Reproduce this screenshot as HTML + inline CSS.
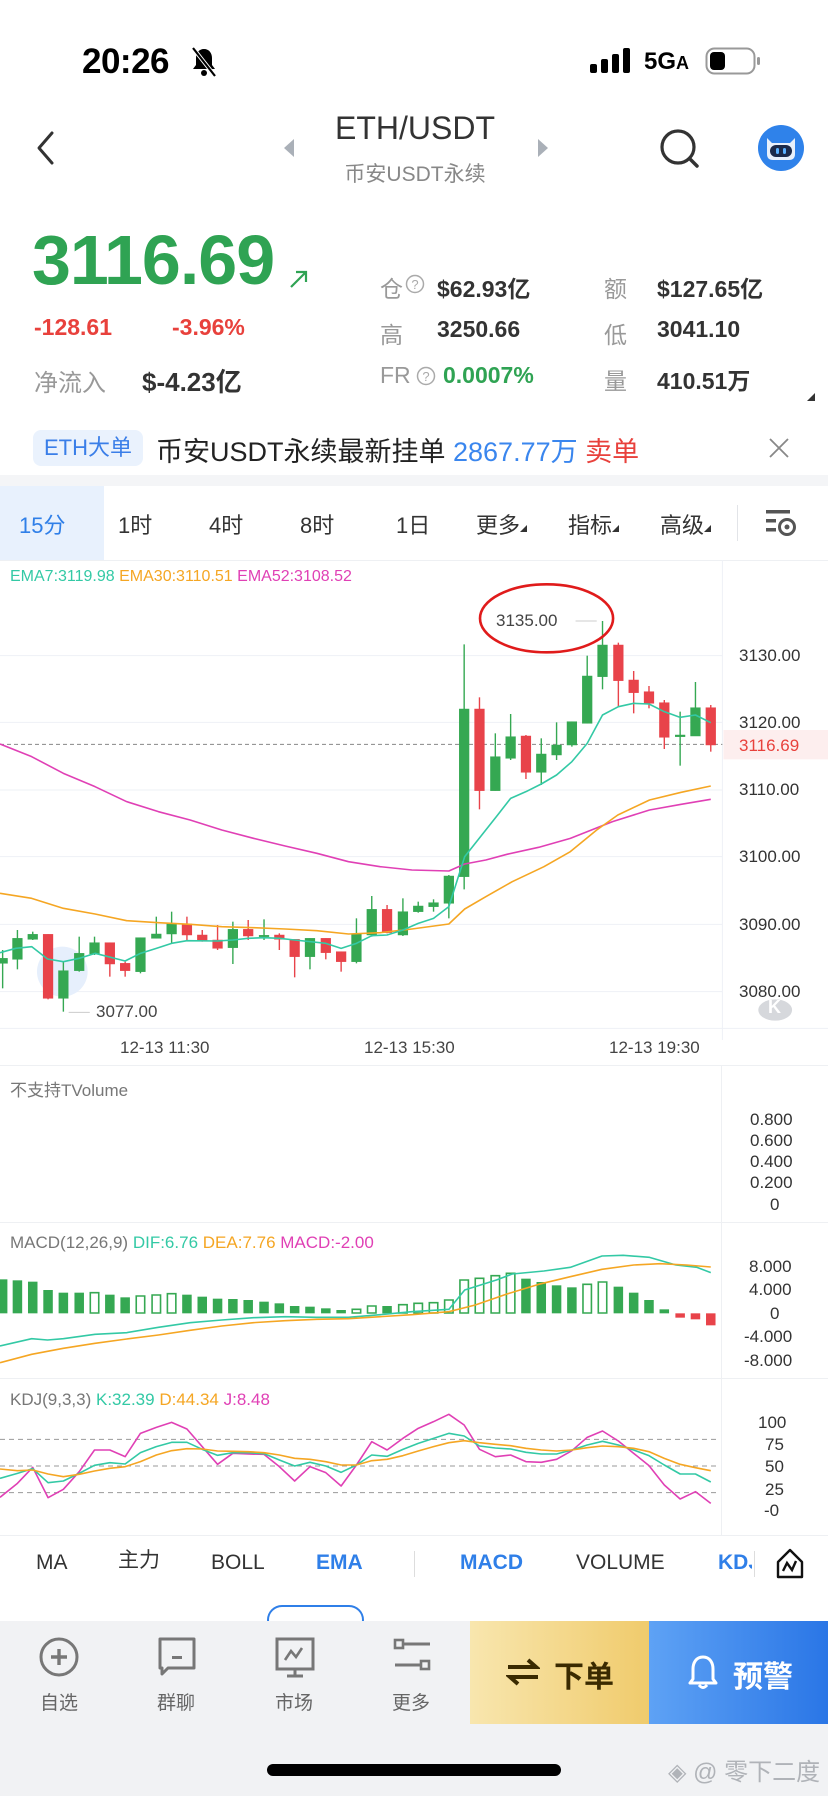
<!DOCTYPE html>
<html><head><meta charset="utf-8">
<style>
*{margin:0;padding:0;box-sizing:border-box}
body{width:828px;height:1796px;position:relative;overflow:hidden;background:#fff;font-family:"Liberation Sans","Noto Sans CJK SC",sans-serif;color:#333}
.a{position:absolute;white-space:nowrap}
.lbl{color:#999;font-size:23px}
.val{color:#333;font-size:23px;font-weight:bold}
.tab{position:absolute;top:508px;font-size:22px;color:#333}
.ax{position:absolute;font-size:17px;color:#333}
.ind{position:absolute;top:1548px;font-size:21px;color:#333;line-height:30px}
.bl{position:absolute;top:1688px;font-size:19px;color:#666;width:60px;text-align:center}
</style></head><body>

<!-- status bar -->
<div class="a" style="left:82px;top:42px;font-size:35px;font-weight:bold;color:#000;letter-spacing:-0.5px">20:26</div>
<svg class="a" style="left:190px;top:46px" width="28" height="32" viewBox="0 0 28 32"><path d="M14 3c-5 0-8 4-8 9v7l-3 4h22l-3-4v-7c0-5-3-9-8-9z" fill="#000"/><circle cx="14" cy="27" r="3" fill="#000"/><line x1="3" y1="2" x2="25" y2="30" stroke="#fff" stroke-width="4"/><line x1="3" y1="2" x2="25" y2="30" stroke="#000" stroke-width="2.2"/></svg>
<svg class="a" style="left:590px;top:48px" width="42" height="26"><rect x="0" y="16" width="7" height="9" rx="2" fill="#000"/><rect x="11" y="11" width="7" height="14" rx="2" fill="#000"/><rect x="22" y="6" width="7" height="19" rx="2" fill="#000"/><rect x="33" y="0" width="7" height="25" rx="2" fill="#000"/></svg>
<div class="a" style="left:644px;top:48px;font-size:24px;font-weight:bold;color:#000">5G<span style="font-size:18px">A</span></div>
<svg class="a" style="left:705px;top:47px" width="56" height="28"><rect x="1.5" y="1.5" width="48" height="25" rx="8" fill="none" stroke="#999" stroke-width="2"/><rect x="5" y="5" width="15" height="18" rx="4" fill="#000"/><rect x="52" y="10" width="3" height="8" rx="1.5" fill="#999"/></svg>

<!-- nav -->
<svg class="a" style="left:34px;top:130px" width="24" height="36"><path d="M18 3 L5 18 L18 33" fill="none" stroke="#333" stroke-width="3" stroke-linecap="round" stroke-linejoin="round"/></svg>
<svg class="a" style="left:282px;top:138px" width="14" height="20"><path d="M12 1 L2 10 L12 19z" fill="#aab0b8"/></svg>
<svg class="a" style="left:536px;top:138px" width="14" height="20"><path d="M2 1 L12 10 L2 19z" fill="#aab0b8"/></svg>
<div class="a" style="left:280px;width:270px;text-align:center;top:110px;font-size:32px;color:#333">ETH/USDT</div>
<div class="a" style="left:280px;width:270px;text-align:center;top:158px;font-size:21px;color:#888">币安USDT永续</div>
<svg class="a" style="left:658px;top:128px" width="44" height="42"><circle cx="20" cy="19" r="16" fill="none" stroke="#333" stroke-width="3.2"/><line x1="32" y1="31" x2="39" y2="38" stroke="#333" stroke-width="3.5" stroke-linecap="round"/></svg>
<svg class="a" style="left:757px;top:124px" width="48" height="48"><circle cx="24" cy="24" r="23" fill="#2f82ea"/><path d="M10 14 L15 19 L33 19 L38 14 L38 30 Q38 36 32 36 L16 36 Q10 36 10 30z" fill="#e8f0fb"/><rect x="13" y="21" width="22" height="12" rx="6" fill="#1b2a4a"/><rect x="19" y="24" width="3" height="6" rx="1.5" fill="#5ab0ff"/><rect x="26" y="24" width="3" height="6" rx="1.5" fill="#5ab0ff"/></svg>

<!-- price -->
<div class="a" style="left:32px;top:220px;font-size:70px;font-weight:bold;color:#2fa353;letter-spacing:-1px">3116.69</div>
<svg class="a" style="left:288px;top:268px" width="22" height="22"><path d="M3 19 L18 4 M8 4 L18 4 L18 14" fill="none" stroke="#2fa353" stroke-width="2.2"/></svg>
<div class="a" style="left:34px;top:314px;font-size:23px;font-weight:bold;color:#e8413c">-128.61</div>
<div class="a" style="left:172px;top:314px;font-size:23px;font-weight:bold;color:#e8413c">-3.96%</div>
<div class="a lbl" style="left:34px;top:363px;font-size:24px">净流入</div>
<div class="a val" style="left:142px;top:362px;font-size:26px">$-4.23亿</div>

<div class="a lbl" style="left:380px;top:270px">仓</div>
<svg class="a" style="left:405px;top:274px" width="20" height="20"><circle cx="10" cy="10" r="8.5" fill="none" stroke="#aaa" stroke-width="1.5"/><text x="10" y="15" font-size="13" text-anchor="middle" fill="#aaa" font-family="Liberation Sans">?</text></svg>
<div class="a val" style="left:437px;top:270px">$62.93亿</div>
<div class="a lbl" style="left:604px;top:270px">额</div>
<div class="a val" style="left:657px;top:270px">$127.65亿</div>
<div class="a lbl" style="left:380px;top:316px">高</div>
<div class="a val" style="left:437px;top:316px">3250.66</div>
<div class="a lbl" style="left:604px;top:316px">低</div>
<div class="a val" style="left:657px;top:316px">3041.10</div>
<div class="a lbl" style="left:380px;top:362px">FR</div>
<svg class="a" style="left:416px;top:366px" width="20" height="20"><circle cx="10" cy="10" r="8.5" fill="none" stroke="#aaa" stroke-width="1.5"/><text x="10" y="15" font-size="13" text-anchor="middle" fill="#aaa" font-family="Liberation Sans">?</text></svg>
<div class="a val" style="left:443px;top:362px;color:#2fa353">0.0007%</div>
<div class="a lbl" style="left:604px;top:362px">量</div>
<div class="a val" style="left:657px;top:362px">410.51万</div>
<svg class="a" style="left:806px;top:392px" width="10" height="10"><path d="M9 1 L9 9 L1 9z" fill="#333"/></svg>

<!-- banner -->
<div class="a" style="left:33px;top:430px;width:110px;height:36px;background:#eaf2fd;border-radius:8px;color:#3a7ee8;font-size:22px;line-height:36px;text-align:center">ETH大单</div>
<div class="a" style="left:156px;top:430px;font-size:27px;color:#222">币安USDT永续最新挂单 <span style="color:#3a86ee">2867.77万</span> <span style="color:#e8413c">卖单</span></div>
<svg class="a" style="left:768px;top:437px" width="22" height="22"><path d="M2 2 L20 20 M20 2 L2 20" stroke="#888" stroke-width="1.8"/></svg>

<!-- tabs -->
<div class="a" style="left:0;top:475px;width:828px;height:11px;background:#f4f5f7"></div>
<div class="a" style="left:0;top:486px;width:104px;height:75px;background:#e8f1fd"></div>
<div class="tab" style="left:19px;color:#2f7fe8">15分</div>
<div class="tab" style="left:118px">1时</div>
<div class="tab" style="left:209px">4时</div>
<div class="tab" style="left:300px">8时</div>
<div class="tab" style="left:396px">1日</div>
<div class="tab" style="left:476px">更多</div>
<div class="tab" style="left:568px">指标</div>
<div class="tab" style="left:660px">高级</div>
<svg class="a" style="left:520px;top:525px" width="8" height="8"><path d="M7 0 L7 7 L0 7z" fill="#333"/></svg>
<svg class="a" style="left:612px;top:525px" width="8" height="8"><path d="M7 0 L7 7 L0 7z" fill="#333"/></svg>
<svg class="a" style="left:704px;top:525px" width="8" height="8"><path d="M7 0 L7 7 L0 7z" fill="#333"/></svg>
<div class="a" style="left:737px;top:505px;width:1px;height:36px;background:#e2e4e8"></div>
<svg class="a" style="left:764px;top:506px" width="34" height="34"><rect x="2" y="4" width="24" height="3.5" fill="#555"/><rect x="2" y="13" width="10" height="3.5" fill="#555"/><rect x="2" y="22" width="10" height="3.5" fill="#555"/><circle cx="23" cy="21" r="7.5" fill="none" stroke="#555" stroke-width="3"/><circle cx="23" cy="21" r="2.5" fill="#555"/></svg>
<div class="a" style="left:0;top:560px;width:828px;height:1px;background:#eef0f3"></div>

<!-- main chart -->
<svg class="a" style="left:0;top:560px" width="828" height="480" viewBox="0 0 1568 1440" preserveAspectRatio="none">
<g stroke="#eef1f6" stroke-width="1">
<line x1="0" y1="287" x2="1368" y2="287" vector-effect="non-scaling-stroke"/>
<line x1="0" y1="487" x2="1368" y2="487" vector-effect="non-scaling-stroke"/>
<line x1="0" y1="690" x2="1368" y2="690" vector-effect="non-scaling-stroke"/>
<line x1="0" y1="890" x2="1368" y2="890" vector-effect="non-scaling-stroke"/>
<line x1="0" y1="1093" x2="1368" y2="1093" vector-effect="non-scaling-stroke"/>
<line x1="0" y1="1295" x2="1368" y2="1295" vector-effect="non-scaling-stroke"/>
<line x1="1368" y1="0" x2="1368" y2="1440" vector-effect="non-scaling-stroke"/>
<line x1="0" y1="1405" x2="1568" y2="1405" vector-effect="non-scaling-stroke"/>
</g>
<rect x="1370" y="510" width="198" height="88" fill="#fdeeee"/>
<line x1="0" y1="553" x2="1368" y2="553" stroke="#888" stroke-dasharray="4 3" vector-effect="non-scaling-stroke"/>
<ellipse cx="118" cy="1235" rx="48" ry="75" fill="#e6effc"/>
<g stroke-width="1.4">
<g fill="#35a852" stroke="#35a852">
<line x1="5" y1="1170" x2="5" y2="1285" vector-effect="non-scaling-stroke"/><rect x="-4" y="1195" width="18" height="15"/>
<line x1="33" y1="1110" x2="33" y2="1228" vector-effect="non-scaling-stroke"/><rect x="24" y="1135" width="18" height="63"/>
<line x1="62" y1="1115" x2="62" y2="1140" vector-effect="non-scaling-stroke"/><rect x="53" y="1123" width="18" height="15"/>
<line x1="120" y1="1205" x2="120" y2="1355" vector-effect="non-scaling-stroke"/><rect x="111" y="1232" width="18" height="83"/>
<line x1="150" y1="1130" x2="150" y2="1235" vector-effect="non-scaling-stroke"/><rect x="141" y="1180" width="18" height="52"/>
<line x1="179" y1="1130" x2="179" y2="1185" vector-effect="non-scaling-stroke"/><rect x="170" y="1148" width="18" height="34"/>
<line x1="266" y1="1133" x2="266" y2="1240" vector-effect="non-scaling-stroke"/><rect x="257" y="1133" width="18" height="102"/>
<line x1="296" y1="1070" x2="296" y2="1135" vector-effect="non-scaling-stroke"/><rect x="287" y="1122" width="18" height="13"/>
<line x1="325" y1="1055" x2="325" y2="1150" vector-effect="non-scaling-stroke"/><rect x="316" y="1090" width="18" height="32"/>
<line x1="441" y1="1085" x2="441" y2="1212" vector-effect="non-scaling-stroke"/><rect x="432" y="1108" width="18" height="55"/>
<line x1="500" y1="1078" x2="500" y2="1140" vector-effect="non-scaling-stroke"/><rect x="491" y="1126" width="18" height="4"/>
<line x1="587" y1="1135" x2="587" y2="1228" vector-effect="non-scaling-stroke"/><rect x="578" y="1135" width="18" height="55"/>
<line x1="675" y1="1075" x2="675" y2="1210" vector-effect="non-scaling-stroke"/><rect x="666" y="1122" width="18" height="83"/>
<line x1="704" y1="1008" x2="704" y2="1130" vector-effect="non-scaling-stroke"/><rect x="695" y="1048" width="18" height="77"/>
<line x1="763" y1="1015" x2="763" y2="1128" vector-effect="non-scaling-stroke"/><rect x="754" y="1055" width="18" height="70"/>
<line x1="792" y1="1025" x2="792" y2="1058" vector-effect="non-scaling-stroke"/><rect x="783" y="1038" width="18" height="17"/>
<line x1="821" y1="1018" x2="821" y2="1055" vector-effect="non-scaling-stroke"/><rect x="812" y="1028" width="18" height="12"/>
<line x1="850" y1="945" x2="850" y2="1075" vector-effect="non-scaling-stroke"/><rect x="841" y="948" width="18" height="82"/>
<line x1="879" y1="253" x2="879" y2="988" vector-effect="non-scaling-stroke"/><rect x="870" y="447" width="18" height="503"/>
<line x1="938" y1="520" x2="938" y2="692" vector-effect="non-scaling-stroke"/><rect x="929" y="590" width="18" height="102"/>
<line x1="967" y1="462" x2="967" y2="600" vector-effect="non-scaling-stroke"/><rect x="958" y="530" width="18" height="65"/>
<line x1="1025" y1="535" x2="1025" y2="675" vector-effect="non-scaling-stroke"/><rect x="1016" y="582" width="18" height="55"/>
<line x1="1054" y1="487" x2="1054" y2="600" vector-effect="non-scaling-stroke"/><rect x="1045" y="555" width="18" height="30"/>
<line x1="1083" y1="485" x2="1083" y2="560" vector-effect="non-scaling-stroke"/><rect x="1074" y="485" width="18" height="70"/>
<line x1="1112" y1="287" x2="1112" y2="490" vector-effect="non-scaling-stroke"/><rect x="1103" y="348" width="18" height="142"/>
<line x1="1141" y1="183" x2="1141" y2="388" vector-effect="non-scaling-stroke"/><rect x="1132" y="255" width="18" height="95"/>
<line x1="1288" y1="455" x2="1288" y2="617" vector-effect="non-scaling-stroke"/><rect x="1279" y="525" width="18" height="5"/>
<line x1="1317" y1="366" x2="1317" y2="528" vector-effect="non-scaling-stroke"/><rect x="1308" y="443" width="18" height="85"/>
</g>
<g fill="#e8434a" stroke="#e8434a">
<line x1="91" y1="1123" x2="91" y2="1318" vector-effect="non-scaling-stroke"/><rect x="82" y="1123" width="18" height="192"/>
<line x1="208" y1="1148" x2="208" y2="1250" vector-effect="non-scaling-stroke"/><rect x="199" y="1148" width="18" height="64"/>
<line x1="237" y1="1205" x2="237" y2="1250" vector-effect="non-scaling-stroke"/><rect x="228" y="1210" width="18" height="22"/>
<line x1="354" y1="1070" x2="354" y2="1140" vector-effect="non-scaling-stroke"/><rect x="345" y="1092" width="18" height="33"/>
<line x1="383" y1="1110" x2="383" y2="1145" vector-effect="non-scaling-stroke"/><rect x="374" y="1125" width="18" height="17"/>
<line x1="412" y1="1095" x2="412" y2="1170" vector-effect="non-scaling-stroke"/><rect x="403" y="1140" width="18" height="25"/>
<line x1="470" y1="1080" x2="470" y2="1140" vector-effect="non-scaling-stroke"/><rect x="461" y="1108" width="18" height="20"/>
<line x1="529" y1="1120" x2="529" y2="1170" vector-effect="non-scaling-stroke"/><rect x="520" y="1125" width="18" height="13"/>
<line x1="558" y1="1138" x2="558" y2="1252" vector-effect="non-scaling-stroke"/><rect x="549" y="1138" width="18" height="52"/>
<line x1="617" y1="1135" x2="617" y2="1198" vector-effect="non-scaling-stroke"/><rect x="608" y="1135" width="18" height="43"/>
<line x1="646" y1="1175" x2="646" y2="1235" vector-effect="non-scaling-stroke"/><rect x="637" y="1175" width="18" height="30"/>
<line x1="733" y1="1035" x2="733" y2="1120" vector-effect="non-scaling-stroke"/><rect x="724" y="1048" width="18" height="70"/>
<line x1="908" y1="412" x2="908" y2="748" vector-effect="non-scaling-stroke"/><rect x="899" y="447" width="18" height="245"/>
<line x1="996" y1="525" x2="996" y2="657" vector-effect="non-scaling-stroke"/><rect x="987" y="528" width="18" height="109"/>
<line x1="1171" y1="248" x2="1171" y2="440" vector-effect="non-scaling-stroke"/><rect x="1162" y="255" width="18" height="107"/>
<line x1="1200" y1="333" x2="1200" y2="460" vector-effect="non-scaling-stroke"/><rect x="1191" y="360" width="18" height="38"/>
<line x1="1229" y1="378" x2="1229" y2="445" vector-effect="non-scaling-stroke"/><rect x="1220" y="395" width="18" height="35"/>
<line x1="1258" y1="420" x2="1258" y2="567" vector-effect="non-scaling-stroke"/><rect x="1249" y="428" width="18" height="104"/>
<line x1="1346" y1="435" x2="1346" y2="575" vector-effect="non-scaling-stroke"/><rect x="1337" y="443" width="18" height="112"/>
</g>
</g>
<g fill="none" stroke-width="1.6" stroke-linejoin="round">
<polyline vector-effect="non-scaling-stroke" stroke="#e040b5" points="0,552 60,590 120,640 180,680 240,725 300,755 360,780 420,810 480,835 540,858 600,880 660,905 720,920 780,930 850,933 880,912 920,900 960,883 1020,862 1080,835 1120,810 1160,785 1230,750 1290,733 1346,718"/>
<polyline vector-effect="non-scaling-stroke" stroke="#f5a623" points="0,1000 60,1015 120,1045 180,1062 240,1082 300,1088 360,1093 420,1100 480,1103 540,1107 600,1112 660,1122 720,1118 780,1107 850,1092 880,1047 920,1010 970,965 1030,920 1080,875 1130,810 1170,765 1230,720 1290,697 1346,678"/>
<polyline vector-effect="non-scaling-stroke" stroke="#33c9a5" points="0,1178 30,1165 60,1160 90,1197 120,1205 150,1195 180,1180 237,1203 266,1180 296,1165 325,1150 354,1142 412,1143 441,1140 470,1135 500,1133 529,1135 558,1140 617,1150 646,1165 675,1150 704,1127 733,1125 763,1110 792,1090 821,1075 850,1040 880,890 910,830 940,770 967,715 996,695 1025,672 1054,645 1083,605 1112,550 1141,465 1171,440 1200,430 1229,432 1258,455 1288,472 1317,465 1346,488"/>
</g>
<line x1="1090" y1="183" x2="1130" y2="183" stroke="#ccc" vector-effect="non-scaling-stroke"/>
<line x1="130" y1="1357" x2="170" y2="1357" stroke="#ccc" vector-effect="non-scaling-stroke"/>
<ellipse cx="1035" cy="175" rx="126" ry="102" fill="none" stroke="#e01b1b" stroke-width="2.6" vector-effect="non-scaling-stroke"/>
<circle cx="1468" cy="1350" r="32" fill="#d6d8dc"/>
</svg>
<div class="a" style="left:10px;top:568px;font-size:16px"><span style="color:#33c9a5">EMA7:3119.98</span> <span style="color:#f5a623">EMA30:3110.51</span> <span style="color:#e040b5">EMA52:3108.52</span></div>
<div class="a" style="left:496px;top:611px;font-size:17px;color:#444">3135.00</div>
<div class="a" style="left:96px;top:1002px;font-size:17px;color:#444">3077.00</div>
<div class="ax" style="left:739px;top:646px">3130.00</div>
<div class="ax" style="left:739px;top:713px">3120.00</div>
<div class="ax" style="left:739px;top:736px;color:#e8413c">3116.69</div>
<div class="ax" style="left:739px;top:780px">3110.00</div>
<div class="ax" style="left:739px;top:847px">3100.00</div>
<div class="ax" style="left:739px;top:915px">3090.00</div>
<div class="ax" style="left:739px;top:982px">3080.00</div>
<div class="a" style="left:768px;top:997px;font-size:18px;color:#fff;font-weight:bold">K</div>
<div class="ax" style="left:120px;top:1038px;color:#444">12-13 11:30</div>
<div class="ax" style="left:364px;top:1038px;color:#444">12-13 15:30</div>
<div class="ax" style="left:609px;top:1038px;color:#444">12-13 19:30</div>
<div class="a" style="left:0;top:1065px;width:828px;height:1px;background:#eef0f3"></div>

<!-- volume pane -->
<div class="a" style="left:721px;top:1065px;width:1px;height:470px;background:#eef0f3"></div>
<div class="a" style="left:10px;top:1076px;font-size:17px;color:#777">不支持TVolume</div>
<div class="ax" style="left:750px;top:1110px">0.800</div>
<div class="ax" style="left:750px;top:1131px">0.600</div>
<div class="ax" style="left:750px;top:1152px">0.400</div>
<div class="ax" style="left:750px;top:1173px">0.200</div>
<div class="ax" style="left:770px;top:1195px">0</div>
<div class="a" style="left:0;top:1222px;width:828px;height:1px;background:#eef0f3"></div>

<!-- macd/kdj -->
<svg class="a" style="left:0;top:1220px" width="828" height="320" viewBox="0 0 1568 960" preserveAspectRatio="none">
<g fill="#35a852">
<rect x="-4" y="178" width="18" height="102"/><rect x="24" y="181" width="18" height="99"/><rect x="53" y="185" width="18" height="95"/><rect x="82" y="210" width="18" height="70"/><rect x="111" y="218" width="18" height="62"/><rect x="141" y="218" width="18" height="62"/><rect x="199" y="224" width="18" height="56"/><rect x="228" y="232" width="18" height="48"/><rect x="345" y="224" width="18" height="56"/><rect x="374" y="230" width="18" height="50"/><rect x="403" y="236" width="18" height="44"/><rect x="432" y="237" width="18" height="43"/><rect x="461" y="240" width="18" height="40"/><rect x="491" y="245" width="18" height="35"/><rect x="520" y="250" width="18" height="30"/><rect x="549" y="258" width="18" height="22"/><rect x="578" y="260" width="18" height="20"/><rect x="608" y="265" width="18" height="15"/><rect x="637" y="270" width="18" height="10"/><rect x="724" y="258" width="18" height="22"/><rect x="987" y="176" width="18" height="104"/><rect x="1016" y="186" width="18" height="94"/><rect x="1045" y="196" width="18" height="84"/><rect x="1074" y="202" width="18" height="78"/><rect x="1162" y="200" width="18" height="80"/><rect x="1191" y="218" width="18" height="62"/><rect x="1220" y="240" width="18" height="40"/><rect x="1249" y="268" width="18" height="12"/>
</g>
<g fill="none" stroke="#35a852" stroke-width="1.6">
<rect vector-effect="non-scaling-stroke" x="171" y="218" width="16" height="61"/><rect vector-effect="non-scaling-stroke" x="258" y="228" width="16" height="51"/><rect vector-effect="non-scaling-stroke" x="288" y="225" width="16" height="54"/><rect vector-effect="non-scaling-stroke" x="317" y="221" width="16" height="58"/><rect vector-effect="non-scaling-stroke" x="667" y="268" width="16" height="11"/><rect vector-effect="non-scaling-stroke" x="696" y="258" width="16" height="21"/><rect vector-effect="non-scaling-stroke" x="755" y="254" width="16" height="25"/><rect vector-effect="non-scaling-stroke" x="784" y="250" width="16" height="29"/><rect vector-effect="non-scaling-stroke" x="813" y="248" width="16" height="31"/><rect vector-effect="non-scaling-stroke" x="842" y="240" width="16" height="39"/><rect vector-effect="non-scaling-stroke" x="871" y="180" width="16" height="99"/><rect vector-effect="non-scaling-stroke" x="900" y="175" width="16" height="104"/><rect vector-effect="non-scaling-stroke" x="930" y="167" width="16" height="112"/><rect vector-effect="non-scaling-stroke" x="959" y="160" width="16" height="119"/><rect vector-effect="non-scaling-stroke" x="1104" y="193" width="16" height="86"/><rect vector-effect="non-scaling-stroke" x="1133" y="186" width="16" height="93"/>
</g>
<g fill="#e8434a"><rect x="1279" y="280" width="18" height="13"/><rect x="1308" y="280" width="18" height="18"/><rect x="1337" y="280" width="18" height="36"/></g>
<g fill="none" stroke-width="1.6" stroke-linejoin="round">
<polyline vector-effect="non-scaling-stroke" stroke="#33c9a5" points="0,378 60,356 90,360 120,356 180,343 240,338 300,322 360,308 420,300 480,293 540,290 600,292 660,292 720,284 780,275 850,268 880,210 940,180 970,162 1030,153 1080,142 1140,108 1180,106 1230,112 1280,135 1320,142 1346,158"/>
<polyline vector-effect="non-scaling-stroke" stroke="#f5a623" points="0,428 60,403 120,385 180,370 240,357 300,345 360,331 420,318 480,308 540,302 600,298 660,296 720,290 780,284 850,275 900,255 960,222 1020,193 1080,170 1140,148 1200,135 1250,131 1300,135 1346,141"/>
</g>
<g stroke="#999" stroke-dasharray="5 4">
<line vector-effect="non-scaling-stroke" x1="0" y1="658" x2="1360" y2="658"/><line vector-effect="non-scaling-stroke" x1="0" y1="738" x2="1360" y2="738"/><line vector-effect="non-scaling-stroke" x1="0" y1="818" x2="1360" y2="818"/>
</g>
<g fill="none" stroke-width="1.6" stroke-linejoin="round">
<polyline vector-effect="non-scaling-stroke" stroke="#e040b5" points="0,832 33,790 62,742 91,833 120,808 150,755 179,690 208,690 237,710 266,640 296,622 325,607 354,627 383,680 412,733 441,700 470,702 500,703 529,740 558,783 587,740 617,758 646,798 675,735 704,665 733,690 763,655 792,625 821,605 850,583 879,615 908,688 938,710 967,705 996,725 1025,727 1054,718 1083,692 1112,652 1141,633 1171,663 1200,700 1229,737 1258,795 1288,837 1317,815 1346,850"/>
<polyline vector-effect="non-scaling-stroke" stroke="#33c9a5" points="0,775 33,760 62,746 91,788 120,783 150,760 179,736 208,728 237,732 266,698 296,680 325,667 354,667 383,688 412,706 441,698 470,698 500,701 529,720 558,738 587,727 617,738 646,757 675,735 704,705 733,709 763,688 792,670 821,655 850,640 879,648 908,678 938,684 967,687 996,697 1025,702 1054,702 1083,690 1112,675 1141,664 1171,675 1200,690 1229,707 1258,735 1288,762 1317,762 1346,786"/>
<polyline vector-effect="non-scaling-stroke" stroke="#f5a623" points="0,747 33,752 62,750 91,762 120,770 150,763 179,753 208,745 237,740 266,725 296,705 325,692 354,686 383,687 412,693 441,694 470,695 500,698 529,705 558,715 587,718 617,725 646,735 675,735 704,722 733,718 763,707 792,693 821,680 850,668 879,662 908,668 938,673 967,677 996,685 1025,690 1054,693 1083,690 1112,683 1141,678 1171,680 1200,685 1229,695 1258,715 1288,733 1317,743 1346,752"/>
</g>
</svg>
<div class="a" style="left:10px;top:1233px;font-size:17px;color:#777">MACD(12,26,9) <span style="color:#33c9a5">DIF:6.76</span> <span style="color:#f5a623">DEA:7.76</span> <span style="color:#e040b5">MACD:-2.00</span></div>
<div class="ax" style="left:749px;top:1257px">8.000</div>
<div class="ax" style="left:749px;top:1280px">4.000</div>
<div class="ax" style="left:770px;top:1304px">0</div>
<div class="ax" style="left:744px;top:1327px">-4.000</div>
<div class="ax" style="left:744px;top:1351px">-8.000</div>
<div class="a" style="left:0;top:1378px;width:828px;height:1px;background:#eef0f3"></div>
<div class="a" style="left:10px;top:1390px;font-size:17px;color:#777">KDJ(9,3,3) <span style="color:#33c9a5">K:32.39</span> <span style="color:#f5a623">D:44.34</span> <span style="color:#e040b5">J:8.48</span></div>
<div class="ax" style="left:758px;top:1413px">100</div>
<div class="ax" style="left:765px;top:1435px">75</div>
<div class="ax" style="left:765px;top:1457px">50</div>
<div class="ax" style="left:765px;top:1480px">25</div>
<div class="ax" style="left:764px;top:1501px">-0</div>
<div class="a" style="left:0;top:1535px;width:828px;height:1px;background:#eef0f3"></div>

<!-- indicator row -->
<div class="ind" style="left:36px">MA</div>
<div class="ind" style="left:118px;top:1546px">主力</div>
<div class="ind" style="left:211px">BOLL</div>
<div class="ind" style="left:316px;color:#2f7fe8;font-weight:bold">EMA</div>
<div class="a" style="left:414px;top:1551px;width:1px;height:26px;background:#ddd"></div>
<div class="ind" style="left:460px;color:#2f7fe8;font-weight:bold">MACD</div>
<div class="ind" style="left:576px">VOLUME</div>
<div class="a" style="left:718px;top:1548px;width:34px;overflow:hidden;font-size:21px;line-height:30px;color:#2f7fe8;font-weight:bold">KDJ</div>
<div class="a" style="left:754px;top:1551px;width:1px;height:26px;background:#ddd"></div>
<svg class="a" style="left:775px;top:1548px" width="30" height="32"><path d="M15 2 L27 14 L27 29 L3 29 L3 14z" fill="none" stroke="#111" stroke-width="2.4" stroke-linejoin="round"/><path d="M8 23 L12 15 L17 22 L21 13" fill="none" stroke="#111" stroke-width="2.4"/></svg>
<div class="a" style="left:267px;top:1605px;width:97px;height:30px;border:2px solid #2f7fe8;border-radius:16px"></div>

<!-- bottom bar -->
<div class="a" style="left:0;top:1621px;width:828px;height:175px;background:#f1f2f4"></div>
<svg class="a" style="left:38px;top:1636px" width="42" height="42"><circle cx="21" cy="21" r="18" fill="none" stroke="#777" stroke-width="3"/><path d="M21 13 V29 M13 21 H29" stroke="#777" stroke-width="3.4"/></svg>
<div class="bl" style="left:29px">自选</div>
<svg class="a" style="left:156px;top:1636px" width="42" height="42"><path d="M4 3 H38 V32 H12 L6 38 V32 H4z" fill="none" stroke="#777" stroke-width="3" stroke-linejoin="round"/><rect x="16" y="20" width="10" height="3" fill="#777"/></svg>
<div class="bl" style="left:146px">群聊</div>
<svg class="a" style="left:274px;top:1636px" width="42" height="44"><rect x="3" y="3" width="36" height="30" fill="none" stroke="#777" stroke-width="3"/><path d="M11 24 L17 15 L22 21 L28 12" fill="none" stroke="#777" stroke-width="2.6"/><path d="M21 33 V40 M13 40 H29" stroke="#777" stroke-width="3"/></svg>
<div class="bl" style="left:264px">市场</div>
<svg class="a" style="left:392px;top:1636px" width="42" height="42"><rect x="3" y="4" width="8" height="8" fill="none" stroke="#777" stroke-width="2.6"/><path d="M11 8 H38" stroke="#777" stroke-width="3"/><rect x="29" y="25" width="8" height="8" fill="none" stroke="#777" stroke-width="2.6"/><path d="M3 29 H29" stroke="#777" stroke-width="3"/></svg>
<div class="bl" style="left:381px">更多</div>

<div class="a" style="left:470px;top:1621px;width:179px;height:103px;background:linear-gradient(90deg,#f8e6ae,#f0cb6c)"></div>
<svg class="a" style="left:506px;top:1658px" width="34" height="28"><path d="M2 9 H30 L22 2 M32 19 H4 L12 26" fill="none" stroke="#3a2a00" stroke-width="4"/></svg>
<div class="a" style="left:554px;top:1652px;font-size:30px;color:#3a2a00;font-weight:bold">下单</div>
<div class="a" style="left:649px;top:1621px;width:179px;height:103px;background:linear-gradient(90deg,#5ea2f5,#2a76e6)"></div>
<svg class="a" style="left:688px;top:1654px" width="30" height="36"><path d="M15 3 C8 3 5 9 5 15 V25 L2 29 H28 L25 25 V15 C25 9 22 3 15 3z" fill="none" stroke="#fff" stroke-width="3" stroke-linejoin="round"/><path d="M11 31 Q15 36 19 31" fill="none" stroke="#fff" stroke-width="3"/></svg>
<div class="a" style="left:733px;top:1652px;font-size:30px;color:#fff;font-weight:bold">预警</div>

<div class="a" style="left:267px;top:1764px;width:294px;height:12px;background:#000;border-radius:6px"></div>
<div class="a" style="left:668px;top:1752px;font-size:24px;color:#b0b3b8">◈ @ 零下二度</div>
</body></html>
